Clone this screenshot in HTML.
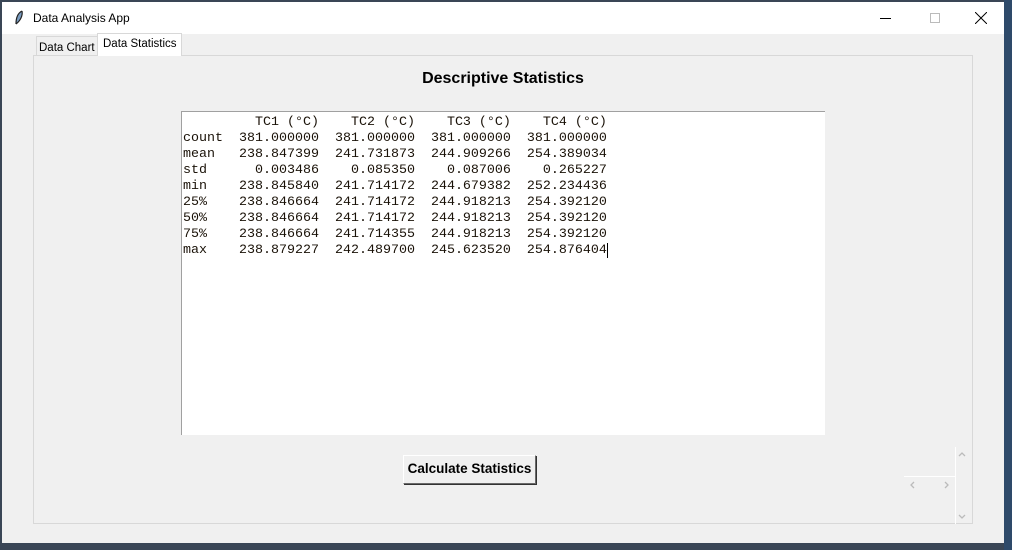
<!DOCTYPE html>
<html><head><style>
*{margin:0;padding:0;box-sizing:border-box}
body{width:1012px;height:550px;background:#3a4656;position:relative;overflow:hidden;font-family:"Liberation Sans",sans-serif}
#win{position:absolute;left:2px;top:2px;width:1002px;height:541px;background:#f0f0f0}
#tb{position:absolute;left:0;top:0;width:1002px;height:32px;background:#fff}
.a{position:absolute;white-space:nowrap}
pre{font-family:"Liberation Mono",monospace;font-size:13.33px;line-height:16px;color:#1a1208}
</style></head><body>
<div class="a" style="left:1004px;top:0;width:8px;height:550px;background:#2e4a6a"></div>
<div id="win">
<div id="tb">
<svg class="a" style="left:12px;top:8px" width="10" height="16"><path d="M8 1 C4 3 2 8 2 14 M8 1 C9 6 6 11 2 14" stroke="#222" fill="#7a9cc0" stroke-width="1.2"/></svg>
<div class="a" style="left:31px;top:9px;font-size:12px;color:#000">Data Analysis App</div>
<div class="a" style="left:878px;top:16px;width:11px;height:1px;background:#000"></div>
<div class="a" style="left:928px;top:11px;width:10px;height:10px;border:1px solid #bbb"></div>
<svg class="a" style="left:973px;top:10px" width="12" height="12"><path d="M0 0L12 12M12 0L0 12" stroke="#000"/></svg>
</div>
<div class="a" style="left:31px;top:53px;width:940px;height:469px;border:1px solid #d8d8d8"></div>
<div class="a" style="left:34px;top:34px;width:62px;height:20px;border:1px solid #d8d8d8;border-bottom:none;font-size:11.5px;padding:5px 0 0 2px">Data Chart</div>
<div class="a" style="left:95px;top:31px;width:85px;height:23px;border:1px solid #d8d8d8;border-bottom:none;background:#fff;font-size:11.5px;padding:4px 0 0 5px">Data Statistics</div>
<div class="a" style="left:0;top:68px;width:1002px;text-align:center;font-size:16px;font-weight:bold;color:#000">Descriptive Statistics</div>
<div class="a" style="left:179px;top:109px;width:644px;height:324px;background:#fff;border-top:1px solid #a0a0a0;border-left:1px solid #a0a0a0">
<pre style="position:absolute;left:1px;top:3px">         TC1 (°C)    TC2 (°C)    TC3 (°C)    TC4 (°C)
count  381.000000  381.000000  381.000000  381.000000
mean   238.847399  241.731873  244.909266  254.389034
std      0.003486    0.085350    0.087006    0.265227
min    238.845840  241.714172  244.679382  252.234436
25%    238.846664  241.714172  244.918213  254.392120
50%    238.846664  241.714172  244.918213  254.392120
75%    238.846664  241.714355  244.918213  254.392120
max    238.879227  242.489700  245.623520  254.876404</pre>
<div class="a" style="left:425px;top:131px;width:1px;height:15px;background:#000"></div>
</div>
<div class="a" style="left:401px;top:453px;width:133px;height:29px;background:#f0f0f0;border:1px solid;border-color:#fff #6a6a6a #6a6a6a #fff;box-shadow:1px 1px 0 #333;font-size:13.5px;font-weight:bold;text-align:center;line-height:26px;color:#000">Calculate Statistics</div>
<div class="a" style="left:953px;top:445px;width:1px;height:77px;background:#fff"></div>
<div class="a" style="left:902px;top:474px;width:51px;height:1px;background:#fff"></div>
<svg class="a" style="left:955px;top:445px" width="12" height="80"><path d="M2 9L5 6L8 9M2 68L5 71L8 68" stroke="#bbb" fill="none" stroke-width="1.3"/></svg>
<svg class="a" style="left:902px;top:476px" width="50" height="14"><path d="M10 4L7 7L10 10M41 4L44 7L41 10" stroke="#bbb" fill="none" stroke-width="1.3"/></svg>
</div>
</body></html>
